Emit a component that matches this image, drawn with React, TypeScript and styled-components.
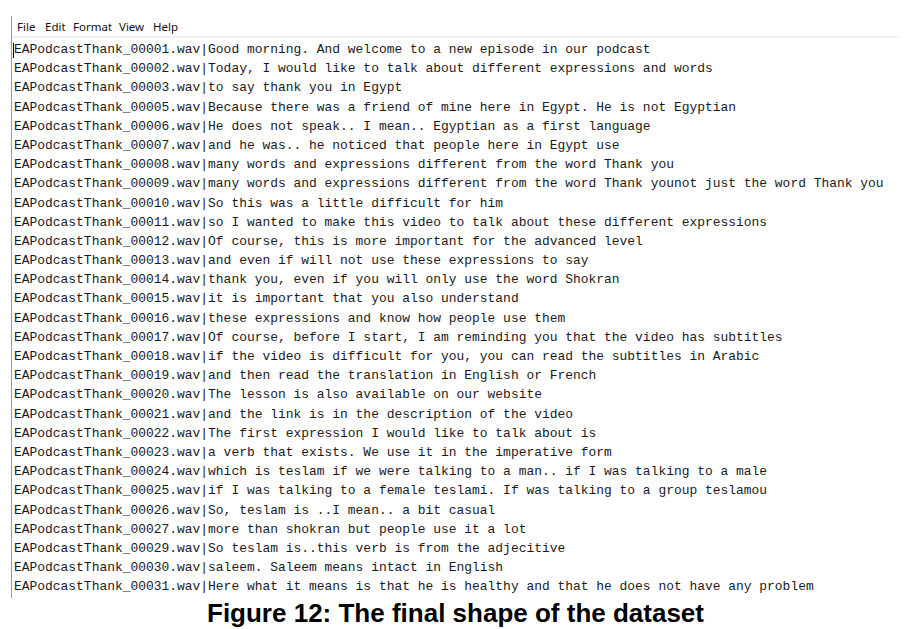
import React from "react";
import styled, { createGlobalStyle } from "styled-components";

const Global = createGlobalStyle`
  html, body { margin: 0; padding: 0; background: #ffffff; }
  body { width: 915px; height: 629px; overflow: hidden; }
`;

const Page = styled.div`
  width: 915px;
  height: 629px;
  display: flex;
  flex-direction: column;
  padding-top: 16px;
  box-sizing: border-box;
`;

const Window = styled.div`
  margin-left: 11px;
  width: 886px;
  border-left: 1px solid #9a9a9a;
  display: flex;
  flex-direction: column;
`;

const MenuBar = styled.div`
  height: 20px;
  display: flex;
  align-items: center;
  padding-left: 4px;
  border-bottom: 2px solid #f0f0f0;
  font-family: "Noto Sans", "Open Sans", sans-serif;
  font-size: 11.5px;
  color: #111;
`;

const MenuItem = styled.span<{ $w: number }>`
  width: ${(p) => p.$w}px;
  padding-left: 1px;
`;

const Editor = styled.div`
  height: 560px;
  overflow: hidden;
  padding-left: 2px;
  padding-top: 2px;
  box-sizing: border-box;
  position: relative;
  font-family: "Liberation Mono", "DejaVu Sans Mono", monospace;
  font-size: 12.95px;
  line-height: 19.2px;
  color: #1a1a1a;
  white-space: pre;
`;

const Line = styled.div`
  height: 19.2px;
`;

const Caret = styled.span`
  position: absolute;
  left: 1px;
  top: 5px;
  width: 1px;
  height: 15px;
  background: #000;
`;

const Caption = styled.div`
  text-align: center;
  margin-top: 1px;
  padding-right: 4px;
  font-family: "Liberation Sans", Arial, sans-serif;
  font-weight: bold;
  font-size: 26px;
  line-height: 28px;
  color: #000;
`;

const rows: [string, string][] = [
  ["00001", "Good morning. And welcome to a new episode in our podcast"],
  ["00002", "Today, I would like to talk about different expressions and words"],
  ["00003", "to say thank you in Egypt"],
  ["00005", "Because there was a friend of mine here in Egypt. He is not Egyptian"],
  ["00006", "He does not speak.. I mean.. Egyptian as a first language"],
  ["00007", "and he was.. he noticed that people here in Egypt use"],
  ["00008", "many words and expressions different from the word Thank you"],
  ["00009", "many words and expressions different from the word Thank younot just the word Thank you"],
  ["00010", "So this was a little difficult for him"],
  ["00011", "so I wanted to make this video to talk about these different expressions"],
  ["00012", "Of course, this is more important for the advanced level"],
  ["00013", "and even if will not use these expressions to say"],
  ["00014", "thank you, even if you will only use the word Shokran"],
  ["00015", "it is important that you also understand"],
  ["00016", "these expressions and know how people use them"],
  ["00017", "Of course, before I start, I am reminding you that the video has subtitles"],
  ["00018", "if the video is difficult for you, you can read the subtitles in Arabic"],
  ["00019", "and then read the translation in English or French"],
  ["00020", "The lesson is also available on our website"],
  ["00021", "and the link is in the description of the video"],
  ["00022", "The first expression I would like to talk about is"],
  ["00023", "a verb that exists. We use it in the imperative form"],
  ["00024", "which is teslam if we were talking to a man.. if I was talking to a male"],
  ["00025", "if I was talking to a female teslami. If was talking to a group teslamou"],
  ["00026", "So, teslam is ..I mean.. a bit casual"],
  ["00027", "more than shokran but people use it a lot"],
  ["00029", "So teslam is..this verb is from the adjecitive"],
  ["00030", "saleem. Saleem means intact in English"],
  ["00031", "Here what it means is that he is healthy and that he does not have any problem"],
];

export default function App() {
  return (
    <>
      <Global />
      <Page>
        <Window>
          <MenuBar>
            <MenuItem $w={27}>File</MenuItem>
            <MenuItem $w={27}>Edit</MenuItem>
            <MenuItem $w={45}>Format</MenuItem>
            <MenuItem $w={33}>View</MenuItem>
            <MenuItem $w={34}>Help</MenuItem>
          </MenuBar>
          <Editor>
            <Caret />
            {rows.map(([id, text]) => (
              <Line key={id}>{`EAPodcastThank_${id}.wav|${text}`}</Line>
            ))}
          </Editor>
        </Window>
        <Caption>Figure 12: The final shape of the dataset</Caption>
      </Page>
    </>
  );
}
